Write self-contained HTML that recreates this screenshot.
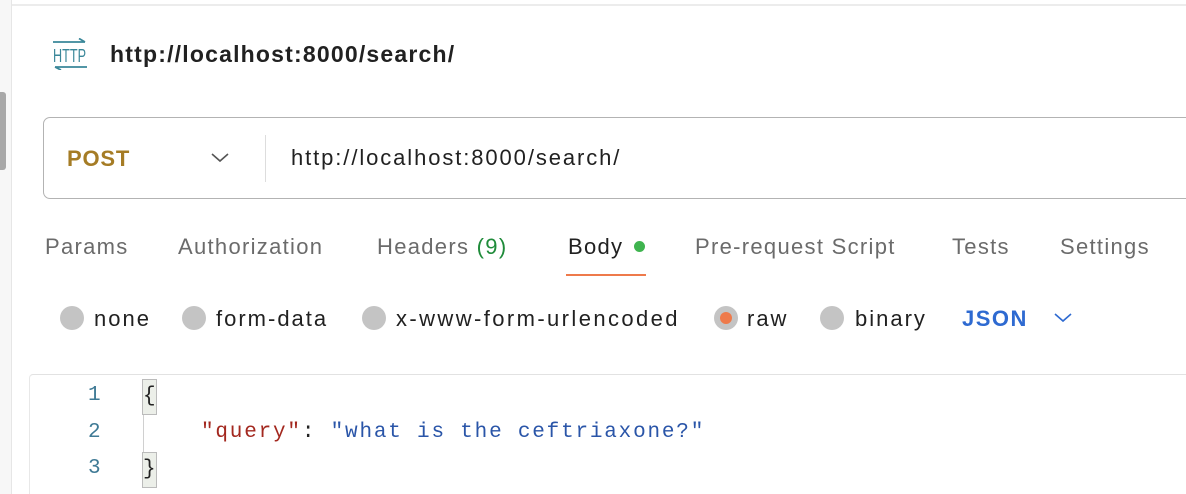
<!DOCTYPE html>
<html><head><style>
html,body{margin:0;width:1186px;height:494px;overflow:hidden}
body{background:#fff;font-family:"Liberation Sans",sans-serif;position:relative}
.a{position:absolute;white-space:nowrap}
.tab{position:absolute;top:234px;font-size:22px;letter-spacing:1.3px;color:#6b6b6b}
.rc{position:absolute;top:306px;width:24px;height:24px;border-radius:50%;background:#c4c4c4}
.rt{position:absolute;top:306px;font-size:22px;letter-spacing:2px;color:#212121}
.mono{font-family:"Liberation Mono",monospace;font-size:21px}
</style></head><body>
<div class="a" style="left:0;top:0;width:11px;height:494px;background:#f7f7f7;border-right:1px solid #e6e6e6"></div>
<div class="a" style="left:0;top:92px;width:6px;height:78px;background:#a8a8a8;border-radius:0 3px 3px 0"></div>
<div class="a" style="left:12px;top:0;width:1174px;height:4px;border-bottom:2px solid #ececec"></div>
<svg class="a" style="left:52px;top:38px" width="36" height="32" viewBox="0 0 36 32">
<g stroke="#3a8799" stroke-width="1.8" fill="none"><path d="M1 4H33M27 0.5L33 4"/><path d="M3 29H35M3 29L9 32"/></g>
<text x="1" y="24" font-family="Liberation Sans, sans-serif" font-size="18" fill="#3a8799" textLength="33" lengthAdjust="spacingAndGlyphs">HTTP</text></svg>
<div class="a" style="left:110px;top:41px;font-size:23px;font-weight:bold;letter-spacing:1.2px;color:#212121">http://localhost:8000/search/</div>
<div class="a" style="left:43px;top:117px;width:1160px;height:80px;border:1.5px solid #b3b3b3;border-radius:7px"></div>
<div class="a" style="left:67px;top:146px;font-size:22px;font-weight:bold;letter-spacing:0.8px;color:#a57c25">POST</div>
<svg class="a" style="left:211px;top:153px" width="18" height="10"><path d="M1 1L9 8L17 1" stroke="#555" stroke-width="1.6" fill="none"/></svg>
<div class="a" style="left:265px;top:135px;width:1px;height:47px;background:#ddd"></div>
<div class="a" style="left:291px;top:145px;font-size:22px;letter-spacing:1.9px;color:#212121">http://localhost:8000/search/</div>
<div class="tab" style="left:45px">Params</div>
<div class="tab" style="left:178px">Authorization</div>
<div class="tab" style="left:377px">Headers <span style="color:#1f8b3a">(9)</span></div>
<div class="tab" style="left:568px;color:#212121">Body</div>
<div class="a" style="left:634px;top:241px;width:11px;height:11px;border-radius:50%;background:#3fb44f"></div>
<div class="a" style="left:566px;top:274px;width:80px;height:2px;background:#ee7a4b"></div>
<div class="tab" style="left:695px">Pre-request Script</div>
<div class="tab" style="left:952px">Tests</div>
<div class="tab" style="left:1060px">Settings</div>
<div class="rc" style="left:60px"></div><div class="rt" style="left:94px">none</div>
<div class="rc" style="left:182px"></div><div class="rt" style="left:216px">form-data</div>
<div class="rc" style="left:362px"></div><div class="rt" style="left:396px;letter-spacing:2.4px">x-www-form-urlencoded</div>
<div class="rc" style="left:714px"></div><div class="a" style="left:720px;top:312px;width:12px;height:12px;border-radius:50%;background:#ee7a4b"></div><div class="rt" style="left:747px">raw</div>
<div class="rc" style="left:820px"></div><div class="rt" style="left:855px">binary</div>
<div class="a" style="left:962px;top:306px;font-size:22px;font-weight:bold;letter-spacing:1.5px;color:#2e6ad1">JSON</div>
<svg class="a" style="left:1054px;top:313px" width="18" height="10"><path d="M1 1L9 8L17 1" stroke="#2e6ad1" stroke-width="1.6" fill="none"/></svg>
<div class="a" style="left:29px;top:374px;width:1160px;height:130px;border-top:1.5px solid #e2e2e2;border-left:1.5px solid #e8e8e8;border-radius:4px 0 0 0"></div>
<div class="a" style="left:143px;top:397px;width:1px;height:64px;background:#d0d0d0"></div>
<div class="a mono" style="left:88px;top:384px;color:#3f7a95">1</div>
<div class="a mono" style="left:88px;top:421px;color:#3f7a95">2</div>
<div class="a mono" style="left:88px;top:457px;color:#3f7a95">3</div>
<div class="a mono" style="left:142px;top:379px;width:13px;height:34px;background:#ecefe9;border:1.5px solid #bbb;line-height:34px;color:#222">{</div>
<div class="a mono" style="left:142px;top:452px;width:13px;height:34px;background:#ecefe9;border:1.5px solid #bbb;line-height:34px;color:#222">}</div>
<div class="a mono" style="left:201px;top:421px;letter-spacing:1.8px"><span style="color:#a3281f">"query"</span><span style="color:#222">: </span><span style="color:#2a55a8">"what is the ceftriaxone?"</span></div>
</body></html>
